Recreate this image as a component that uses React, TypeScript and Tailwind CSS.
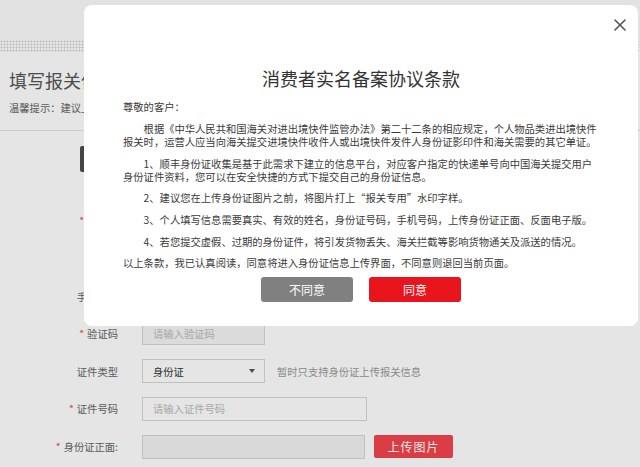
import React from "react";

const Row = ({
  label,
  required,
  children,
}: {
  label: string;
  required?: boolean;
  children?: React.ReactNode;
}) => (
  <div className="flex h-[37.6px] items-center">
    <div className="w-[118px] text-right text-[10.3px] leading-[13px] text-[#666] whitespace-nowrap">
      {required && <span className="mr-[3px] text-[#f04848]">*</span>}
      {label}
    </div>
    <div className="ml-[24px] flex items-center">{children}</div>
  </div>
);

const Input = ({ w, bg, ph, h = "h-[24px]" }: { w: string; bg: string; ph?: string; h?: string }) => (
  <div className={`${w} ${h} ${bg} flex items-center border border-[#d6d6d6] pl-[10px] text-[10.3px] text-[#bbb] whitespace-nowrap`}>
    {ph}
  </div>
);

export default function App() {
  return (
    <div className="relative h-[467px] w-[640px] overflow-hidden bg-white font-['Microsoft_YaHei','Noto_Sans_CJK_SC',sans-serif]">
      {/* background page */}
      <div className="h-[40px] bg-[#fcfcfc]" />
      <div className="h-[12px] bg-[radial-gradient(circle,#d2d2d2_0.9px,transparent_1.1px)] bg-[length:3px_3px]" />
      <div className="pl-[9px]">
        <div className="mt-[17px] text-[18px] leading-[22px] text-[#555]">填写报关信息</div>
        <div className="mt-[9.5px] text-[10.3px] leading-[13px] text-[#666] whitespace-nowrap">
          温馨提示：建议上传清晰的身份证正反面照片，以便顺利清关
        </div>
      </div>
      <div className="mt-[16.5px] border-t border-[#e2e2e2]" />
      <div className="mt-[15px] ml-[80px] h-[26px] w-[90px] rounded-[2px] bg-[#4d4d4d]" />
      <div className="mt-[30.2px]">
        <Row label="收件人" required>
          <Input w="w-[225px]" bg="bg-white" />
        </Row>
        <Row label="邮箱">
          <Input w="w-[225px]" bg="bg-white" />
        </Row>
        <Row label="手机号码">
          <Input w="w-[225px]" bg="bg-white" />
        </Row>
        <Row label="验证码" required>
          <Input w="w-[123px]" bg="bg-[#f4f4f4]" ph="请输入验证码" h="h-[22px]" />
        </Row>
        <Row label="证件类型">
          <div className="flex h-[24px] w-[123px] items-center justify-between border border-[#d6d6d6] bg-white pl-[10px] pr-[9px] text-[10.3px] text-[#333]">
            <span>身份证</span>
            <span className="h-0 w-0 border-x-[3.5px] border-t-[4px] border-x-transparent border-t-[#555]" />
          </div>
          <span className="ml-[12px] text-[10.3px] text-[#999] whitespace-nowrap">暂时只支持身份证上传报关信息</span>
        </Row>
        <Row label="证件号码" required>
          <Input w="w-[225px]" bg="bg-white" ph="请输入证件号码" />
        </Row>
        <Row label="身份证正面:" required>
          <Input w="w-[223px]" bg="bg-[#f2f2f2]" />
          <div className="ml-[9px] flex h-[23px] w-[79px] items-center justify-center rounded-[2px] bg-[#f2464e] text-[12px] tracking-[1px] text-white">
            上传图片
          </div>
        </Row>
      </div>

      {/* overlay */}
      <div className="absolute inset-0 bg-black/10" />

      {/* modal */}
      <div className="absolute left-[84px] top-[5px] h-[321px] w-[554px] rounded-[8px] bg-white">
        <button className="absolute right-[11px] top-[13px] flex h-[14px] w-[14px] items-center justify-center">
          <svg width="12" height="12" viewBox="0 0 12 12">
            <path d="M1 1L11 11M11 1L1 11" stroke="#555" strokeWidth="1.6" strokeLinecap="round" />
          </svg>
        </button>
        <div className="pt-[61px] text-center text-[18px] leading-[24px] text-[#333]">消费者实名备案协议条款</div>
        <div className="mt-[10.2px] pl-[39px] text-[10.3px] leading-[13px] text-[#3a3a3a] whitespace-nowrap">
          <div className="mb-[8.7px]">尊敬的客户：</div>
          <div className="mb-[8.7px]">
            <div className="pl-[20.6px]">根据《中华人民共和国海关对进出境快件监管办法》第二十二条的相应规定，个人物品类进出境快件</div>
            <div>报关时，运营人应当向海关提交进境快件收件人或出境快件发件人身份证影印件和海关需要的其它单证。</div>
          </div>
          <div className="mb-[8.7px]">
            <div className="pl-[20.6px]">1、顺丰身份证收集是基于此需求下建立的信息平台，对应客户指定的快递单号向中国海关提交用户</div>
            <div>身份证件资料，您可以在安全快捷的方式下提交自己的身份证信息。</div>
          </div>
          <div className="mb-[8.7px] pl-[20.6px]">2、建议您在上传身份证图片之前，将图片打上“报关专用”水印字样。</div>
          <div className="mb-[8.7px] pl-[20.6px]">3、个人填写信息需要真实、有效的姓名，身份证号码，手机号码，上传身份证正面、反面电子版。</div>
          <div className="mb-[8.7px] pl-[20.6px]">4、若您提交虚假、过期的身份证件，将引发货物丢失、海关拦截等影响货物通关及派送的情况。</div>
          <div>以上条款，我已认真阅读，同意将进入身份证信息上传界面，不同意则退回当前页面。</div>
        </div>
        <div className="mt-[8px] flex justify-center gap-[16px]">
          <button className="h-[25px] w-[92px] rounded-[3px] bg-[#808080] text-[12px] text-white">不同意</button>
          <button className="h-[25px] w-[92px] rounded-[3px] bg-[#e8151d] text-[12px] text-white">同意</button>
        </div>
      </div>
    </div>
  );
}
